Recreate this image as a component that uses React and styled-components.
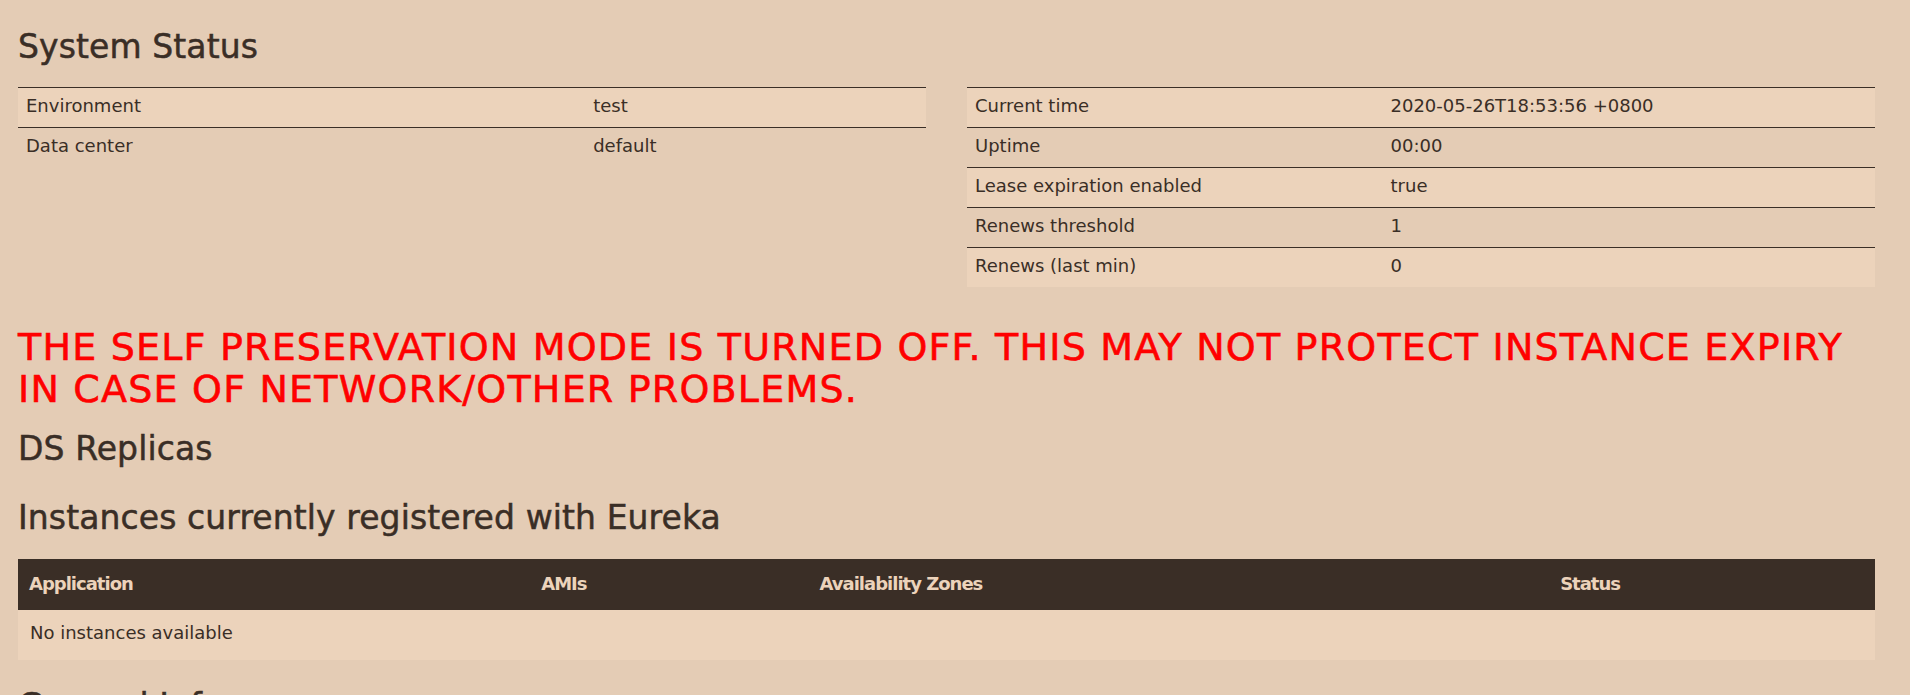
import React from 'react';
import styled, { createGlobalStyle } from 'styled-components';

const GlobalStyle = createGlobalStyle`
  html, body {
    margin: 0;
    padding: 0;
    background-color: #e4ccb5;
  }
  body {
    font-family: "DejaVu Sans", "Liberation Sans", sans-serif;
    color: #3a2e26;
  }
`;

// right padding keeps room where the browser scrollbar sits in the reference
const Page = styled.div`
  padding: 0 35px 33px 18px;
`;

const Heading = styled.h2`
  margin: ${p => p.$top || 20}px 0 0;
  font-size: 33px;
  line-height: 36px;
  font-weight: normal;
  letter-spacing: 0.1px;
  -webkit-text-stroke: 0.5px #3a2e26;
`;

const Columns = styled.div`
  display: grid;
  grid-template-columns: 1fr 1fr;
  column-gap: 41px;
  align-items: start;
  margin-top: 22px;
`;

const Table = styled.table`
  width: 100%;
  border-collapse: collapse;
  table-layout: fixed;
  font-size: 18px;
  line-height: 22px;
  margin-top: ${p => p.$top || 0}px;
`;

const Row = styled.tr`
  border-top: 1px solid #3a2e26;
  &:nth-child(odd) {
    background-color: #ecd3bb;
  }
`;

const Cell = styled.td`
  padding: 7px 8px 10px;
  white-space: nowrap;
  overflow: hidden;
  width: ${p => p.$width || 'auto'};
`;

const HeadRow = styled.tr`
  background-color: #3a2e26;
  color: #ecd3bb;
`;

const HeadCell = styled.th`
  text-align: left;
  font-weight: bold;
  letter-spacing: -1px;
  padding: 14px 11px 15px;
  width: ${p => p.$width || 'auto'};
`;

const BodyRow = styled.tr`
  &:nth-child(odd) {
    background-color: #ecd3bb;
  }
`;

const BodyCell = styled.td`
  padding: 12px 12px 16px;
`;

const Warning = styled.h3`
  margin: 39px 0 0;
  color: #ff0000;
  font-size: 38px;
  line-height: 42px;
  font-weight: normal;
  letter-spacing: 1.2px;
  -webkit-text-stroke: 0.6px #ff0000;
`;

const StatusTable = ({ rows, firstWidth }) => (
  <Table>
    <tbody>
      {rows.map(([name, value]) => (
        <Row key={name}>
          <Cell $width={firstWidth}>{name}</Cell>
          <Cell>{value}</Cell>
        </Row>
      ))}
    </tbody>
  </Table>
);

const envRows = [
  ['Environment', 'test'],
  ['Data center', 'default'],
];

const timeRows = [
  ['Current time', '2020-05-26T18:53:56 +0800'],
  ['Uptime', '00:00'],
  ['Lease expiration enabled', 'true'],
  ['Renews threshold', '1'],
  ['Renews (last min)', '0'],
];

const generalRows = [
  ['total-avail-memory', '413mb'],
  ['environment', 'test'],
  ['num-of-cpus', '8'],
  ['current-memory-usage', '98mb (23%)'],
  ['server-uptime', '00:00'],
  ['registered-replicas', ''],
  ['unavailable-replicas', ''],
  ['available-replicas', ''],
];

export default function App() {
  return (
    <>
      <GlobalStyle />
      <Page>
        <Heading $top={29}>System Status</Heading>
        <Columns>
          <StatusTable rows={envRows} firstWidth="60.7%" />
          <StatusTable rows={timeRows} firstWidth="44%" />
        </Columns>

        <Warning>
          THE SELF PRESERVATION MODE IS TURNED OFF. THIS MAY NOT PROTECT INSTANCE EXPIRY IN CASE OF
          NETWORK/OTHER PROBLEMS.
        </Warning>

        <Heading $top={21}>DS Replicas</Heading>
        <Heading $top={33}>Instances currently registered with Eureka</Heading>

        <Table $top={23}>
          <thead>
            <HeadRow>
              <HeadCell $width="26.4%">Application</HeadCell>
              <HeadCell $width="13.8%">AMIs</HeadCell>
              <HeadCell $width="38.7%">Availability Zones</HeadCell>
              <HeadCell>Status</HeadCell>
            </HeadRow>
          </thead>
          <tbody>
            <BodyRow>
              <BodyCell colSpan={4}>No instances available</BodyCell>
            </BodyRow>
          </tbody>
        </Table>

        <Heading $top={28}>General Info</Heading>
        <Table $top={22}>
          <thead>
            <HeadRow>
              <HeadCell $width="44%">Name</HeadCell>
              <HeadCell>Value</HeadCell>
            </HeadRow>
          </thead>
          <tbody>
            {generalRows.map(([name, value]) => (
              <Row key={name}>
                <Cell>{name}</Cell>
                <Cell>{value}</Cell>
              </Row>
            ))}
          </tbody>
        </Table>
      </Page>
    </>
  );
}
